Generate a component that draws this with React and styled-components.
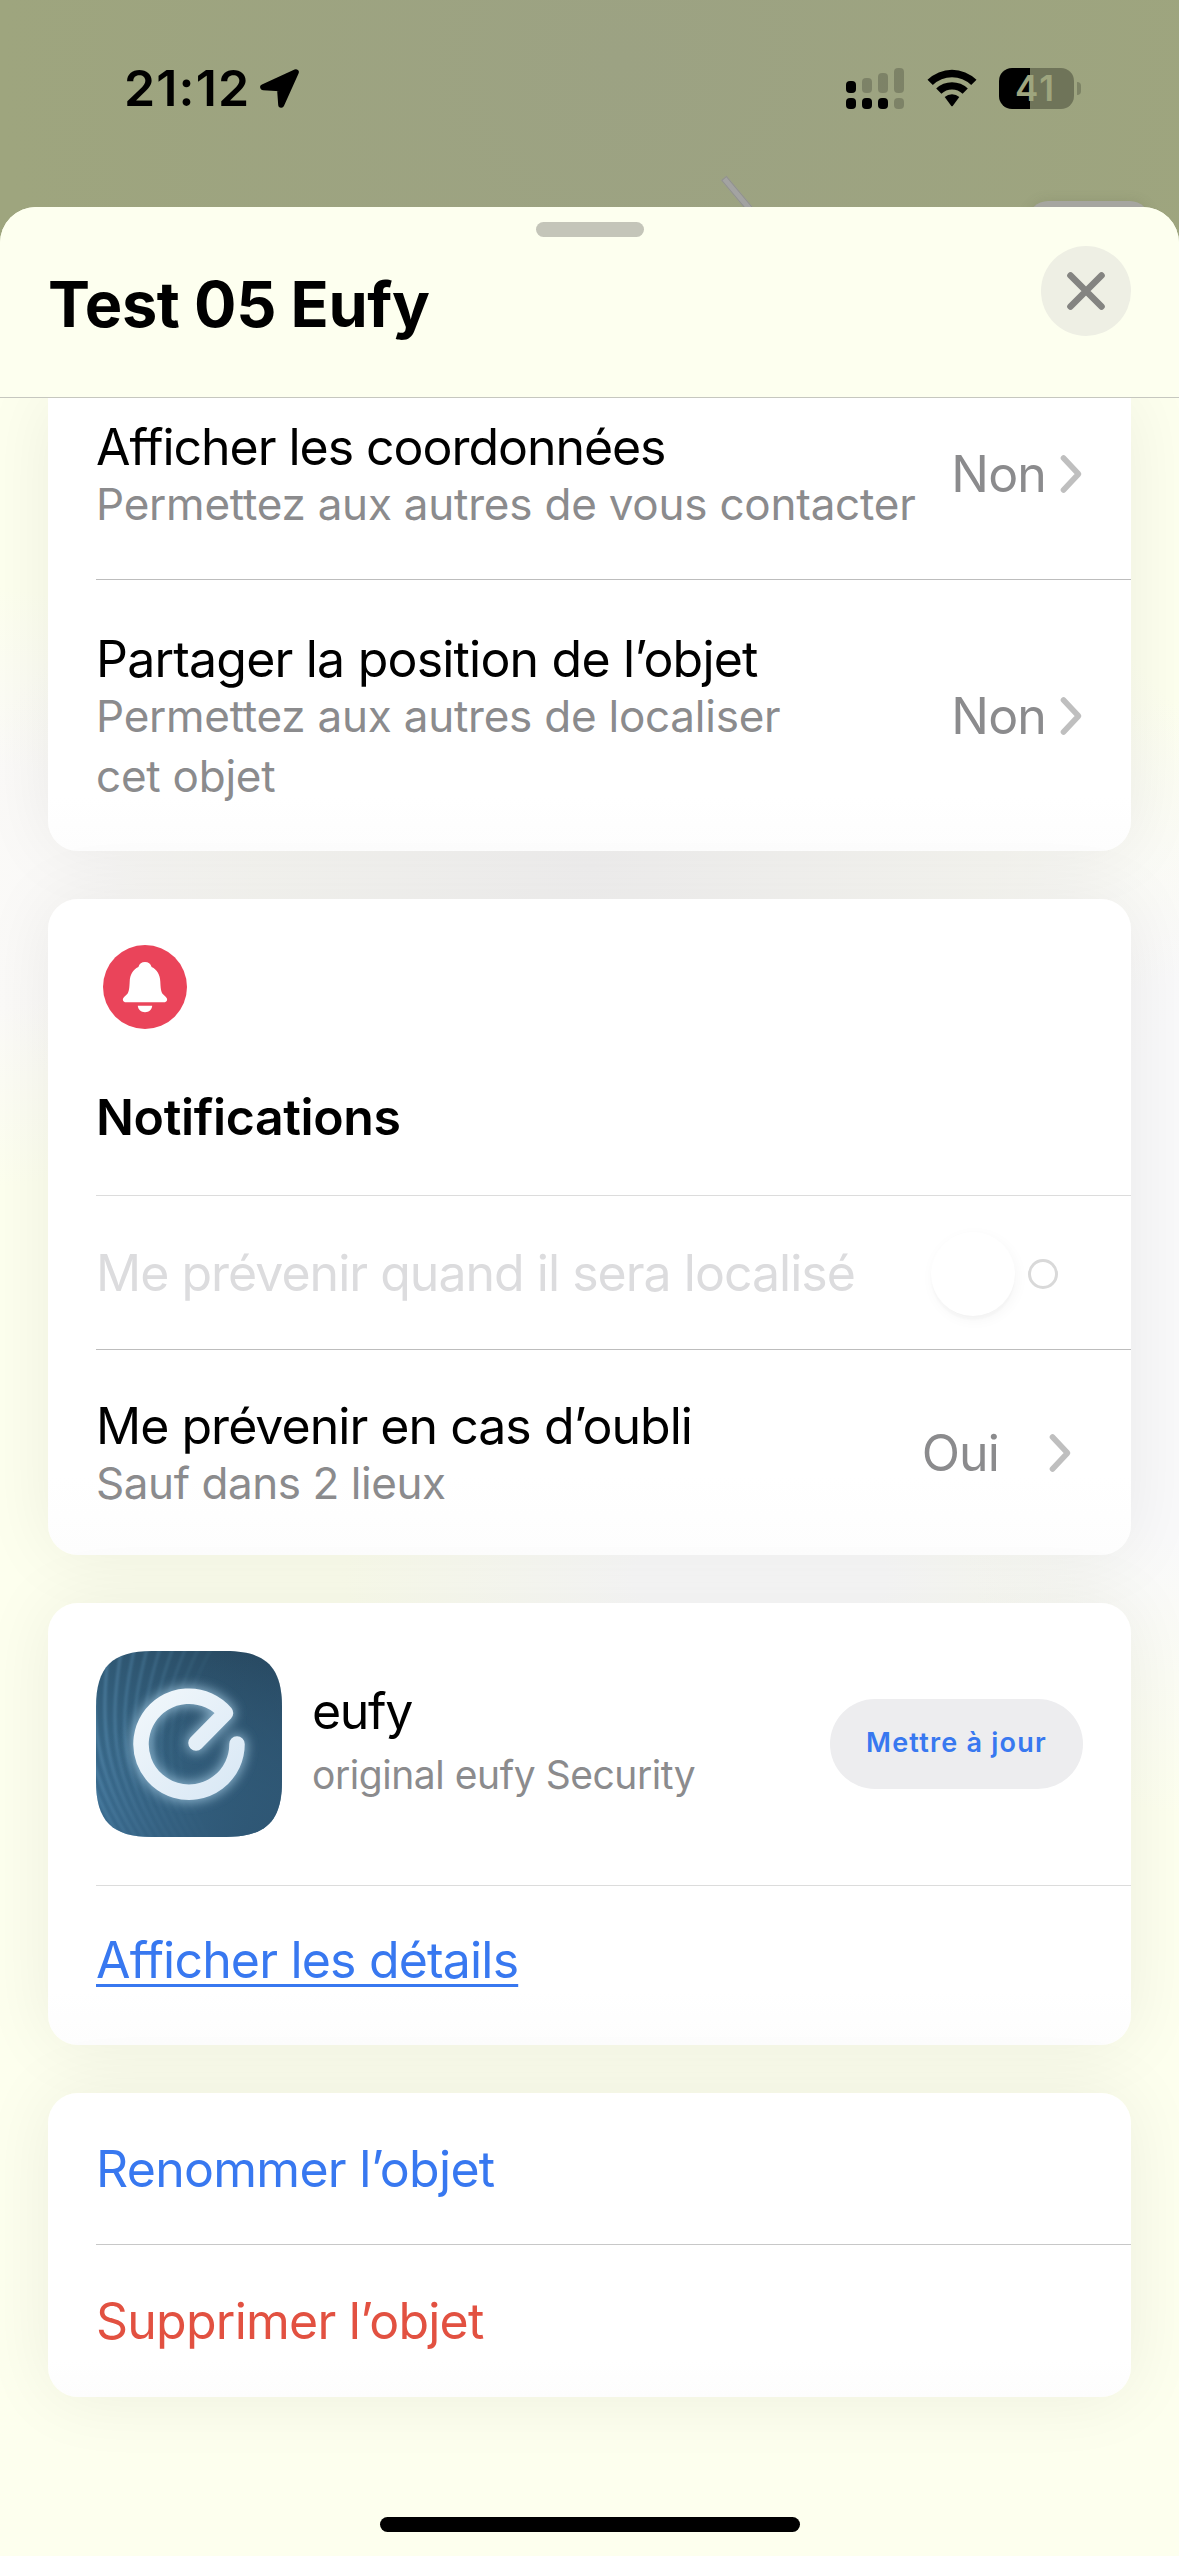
import React from "react";
import styled, { createGlobalStyle, css } from "styled-components";

const GlobalStyle = createGlobalStyle`
  * {
    box-sizing: border-box;
  }

  body {
    margin: 0;
    background: #fdffee;
    font-family: Inter, "Liberation Sans", sans-serif;
    color: #000;
  }
`;

const STRIPES = [0, 1, 2, 3, 4, 5, 6, 7, 8, 9, 10, 11];

const LocationArrow = () => (
  <svg width="41" height="41" viewBox="0 0 41 41">
    <path
      d="M36.8 4.2 L4.2 19.2 L21 20.3 L22.2 36.8 Z"
      fill="#000"
      stroke="#000"
      strokeWidth="6"
      strokeLinejoin="round"
    />
  </svg>
);

const WifiIcon = () => (
  <svg width="52" height="40" viewBox="0 0 52 40">
    <path d="M1.5 11.8 A35 35 0 0 1 50.5 11.8 L45.2 17 A27.6 27.6 0 0 0 6.8 17 Z" />
    <path d="M10.2 20.6 A22.6 22.6 0 0 1 41.8 20.6 L36.6 25.8 A15.3 15.3 0 0 0 15.4 25.8 Z" />
    <path d="M18.7 29.1 A10.6 10.6 0 0 1 33.3 29.1 L26.7 37.9 A1 1 0 0 1 25.3 37.9 Z" />
  </svg>
);

const CloseIcon = () => (
  <svg width="46" height="46" viewBox="0 0 46 46">
    <path
      d="M7.5 7.5 L38.5 38.5 M38.5 7.5 L7.5 38.5"
      stroke="#848481"
      strokeWidth="6.6"
      strokeLinecap="round"
    />
  </svg>
);

const ChevronIcon = () => (
  <svg width="24" height="42" viewBox="0 0 24 42" fill="none">
    <path
      d="M4.5 5 L19.5 21 L4.5 37"
      stroke="#bfbfbf"
      strokeWidth="5.6"
      strokeLinecap="round"
      strokeLinejoin="round"
    />
  </svg>
);

const BellIcon = () => (
  <svg width="84" height="84" viewBox="0 0 84 84">
    <circle cx="42" cy="42" r="42" fill="#ea445a" />
    <path
      d="M42 17 C45.4 17 47.6 18.9 48.6 21.9 C54.2 24.6 57 29.6 57.3 36.4 C57.6 42.8 57.9 46.8 59.8 49 L62.9 52 C65.3 54.4 64 57.3 60.9 57.3 H23.1 C20 57.3 18.7 54.4 21.1 52 L24.2 49 C26.1 46.8 26.4 42.8 26.7 36.4 C27 29.6 29.8 24.6 35.4 21.9 C36.4 18.9 38.6 17 42 17 Z"
      fill="#fff"
    />
    <path
      d="M34.8 60.8 H49.2 C48.8 64.8 46 67.2 42 67.2 C38 67.2 35.2 64.8 34.8 60.8 Z"
      fill="#fff"
    />
  </svg>
);

const EufyLogo = () => (
  <svg width="186" height="186" viewBox="0 0 186 186">
    <defs>
      <linearGradient id="eufyBase" x1="0.1" y1="1" x2="0.8" y2="0">
        <stop offset="0" stopColor="#3f749b" />
        <stop offset="0.4" stopColor="#34617f" />
        <stop offset="1" stopColor="#284961" />
      </linearGradient>
      <linearGradient id="eufySide" x1="0.4" y1="0.2" x2="1" y2="1">
        <stop offset="0" stopColor="#2e5674" stopOpacity="0" />
        <stop offset="1" stopColor="#2e5674" />
      </linearGradient>
      <linearGradient id="eufyStroke" x1="0" y1="0" x2="1" y2="1">
        <stop offset="0" stopColor="#f1f7fb" />
        <stop offset="1" stopColor="#d9e8f5" />
      </linearGradient>
      <filter id="eufyGlow" x="-30%" y="-30%" width="160%" height="160%">
        <feGaussianBlur stdDeviation="6" />
      </filter>
      <filter id="eufySoft">
        <feGaussianBlur stdDeviation="1" />
      </filter>
      <clipPath id="eufyClip">
        <path d="M0 56 C0 16 16 0 56 0 H130 C170 0 186 16 186 56 V130 C186 170 170 186 130 186 H56 C16 186 0 170 0 130 Z" />
      </clipPath>
      <path
        id="eufyMark"
        d="M141 93 A48 48 0 1 1 129.5 62 L100 92"
        fill="none"
        strokeLinecap="round"
        strokeLinejoin="round"
      />
    </defs>
    <g clipPath="url(#eufyClip)">
      <rect width="186" height="186" fill="url(#eufyBase)" />
      <g filter="url(#eufySoft)">
        {STRIPES.map((i) => (
          <path
            key={i}
            d={`M${-26 + i * 13} -6 C${-22 + i * 9} 70 ${-20 + i * 8} 120 ${
              30 + i * 8
            } 196`}
            fill="none"
            stroke="#6aa3c8"
            strokeWidth="3.4"
            opacity={0.42 - i * 0.032}
          />
        ))}
      </g>
      <rect width="186" height="186" fill="url(#eufySide)" />
      <use
        href="#eufyMark"
        stroke="#a9cfe6"
        strokeWidth="20"
        opacity="0.75"
        filter="url(#eufyGlow)"
      />
      <use href="#eufyMark" stroke="url(#eufyStroke)" strokeWidth="15.5" />
    </g>
  </svg>
);

const Setting = ({ title, track, children, value, valueTrack, wide, ...row }) => (
  <Row {...row}>
    <RowText>
      <RowTitle $track={track}>{title}</RowTitle>
      {children}
    </RowText>
    <Value $wide={wide}>
      <ValueText $track={valueTrack}>{value}</ValueText>
      <ChevronIcon />
    </Value>
  </Row>
);

const App = () => {
  return (
    <Screen>
      <GlobalStyle />
      <StatusBar>
        <Clock>
          <Time>21:12</Time>
          <LocationArrow />
        </Clock>
        <Indicators>
          <Signal>
            {[12, 15, 20, 25].map((height, i) => (
              <SignalColumn key={height}>
                <Bar $height={height} $on={i < 1} />
                <Bar $height={11} $on={i < 3} />
              </SignalColumn>
            ))}
          </Signal>
          <WifiIcon />
          <Battery>
            <BatteryBody>41</BatteryBody>
            <BatteryTip />
          </Battery>
        </Indicators>
        <Road />
        <MapButton />
      </StatusBar>

      <Sheet>
        <Header>
          <Grabber />
          <HeaderRow>
            <Title>Test 05 Eufy</Title>
            <CloseButton aria-label="Fermer">
              <CloseIcon />
            </CloseButton>
          </HeaderRow>
        </Header>

        <Content>
          <Card $cut>
            <Setting
              title="Afficher les coordonnées"
              track={-1.04}
              value="Non"
              valueTrack={-0.83}
              $height={182}
              $top={22}
              $bottom={45}
              $divider="#bdbdbd"
            >
              <Subtitle $track={-0.23}>
                Permettez aux autres de vous contacter
              </Subtitle>
            </Setting>
            <Setting
              title="Partager la position de l’objet"
              track={-0.8}
              value="Non"
              valueTrack={-0.83}
              $height={271}
              $top={52}
              $bottom={45}
            >
              <Subtitle $track={-0.24}>
                Permettez aux autres de localiser
                <br />
                cet objet
              </Subtitle>
            </Setting>
          </Card>

          <Card>
            <SectionHead>
              <BellIcon />
              <SectionTitle>Notifications</SectionTitle>
            </SectionHead>
            <Row $height={154} $divider="#bdbdbd">
              <RowTitle $track={-0.98} $color="#dcdcde">
                Me prévenir quand il sera localisé
              </RowTitle>
              <Toggle>
                <Knob />
                <OffMark />
              </Toggle>
            </Row>
            <Setting
              title="Me prévenir en cas d’oubli"
              track={-0.97}
              value="Oui"
              valueTrack={-0.9}
              wide
              $height={205}
              $top={49}
              $bottom={42}
            >
              <Subtitle $track={-0.44}>Sauf dans 2 lieux</Subtitle>
            </Setting>
          </Card>

          <Card>
            <Row $height={283} $divider="#dcdcdc">
              <AppInfo>
                <EufyLogo />
                <AppText>
                  <RowTitle $track={-1.3}>eufy</RowTitle>
                  <Publisher>original eufy Security</Publisher>
                </AppText>
              </AppInfo>
              <UpdateButton>Mettre à jour</UpdateButton>
            </Row>
            <Row $height={159}>
              <DetailsLink href="#details">Afficher les détails</DetailsLink>
            </Row>
          </Card>

          <Card>
            <Row $height={152} $divider="#c8c8c8">
              <RowTitle $track={-0.72} $color="#3878f0">
                Renommer l’objet
              </RowTitle>
            </Row>
            <Row $height={152}>
              <RowTitle $track={-0.77} $color="#e25141">
                Supprimer l’objet
              </RowTitle>
            </Row>
          </Card>
        </Content>
        <HomeIndicator />
      </Sheet>
    </Screen>
  );
};

const Screen = styled.div`
  display: flex;
  flex-direction: column;
  width: 1179px;
  height: 2556px;
  overflow: hidden;
  background: radial-gradient(circle at 620px 60px, #9ca283, #9ea57e 620px);
`;

const StatusBar = styled.div`
  position: relative;
  display: flex;
  justify-content: space-between;
  align-items: center;
  height: 207px;
  padding: 0 98px 31px 124px;
`;

const Clock = styled.div`
  display: flex;
  align-items: center;
  gap: 9px;
`;

const Time = styled.span`
  font-size: 50px;
  font-weight: 600;
  line-height: 60px;
  letter-spacing: 1.16px;
`;

const Indicators = styled.div`
  display: flex;
  align-items: center;
  gap: 21px;
`;

const Signal = styled.div`
  display: flex;
  align-items: flex-end;
  gap: 6px;
  margin-right: 1px;
`;

const SignalColumn = styled.div`
  display: flex;
  flex-direction: column;
  gap: 5px;
`;

const Bar = styled.span`
  width: 10px;
  height: ${({ $height }) => $height}px;
  border-radius: 4px;
  background: ${({ $on }) => ($on ? "#000" : "rgba(0, 0, 0, 0.2)")};
`;

const Battery = styled.div`
  display: flex;
  align-items: center;
  gap: 3px;
`;

const BatteryBody = styled.div`
  width: 75px;
  height: 41px;
  padding-right: 2px;
  border-radius: 13px;
  background: linear-gradient(90deg, #000 41%, #6f7459 41%);
  color: #9ea57e;
  font-size: 35px;
  font-weight: 600;
  line-height: 41px;
  letter-spacing: 2px;
  text-align: center;
`;

const BatteryTip = styled.span`
  width: 4px;
  height: 13px;
  border-radius: 0 6px 6px 0;
  background: #7d8365;
`;

/* bits of the map that show above the sheet */
const Road = styled.span`
  position: absolute;
  left: 737px;
  top: 172px;
  width: 7px;
  height: 52px;
  background: #a3a3a2;
  border: 1px solid #91928c;
  transform: rotate(-40deg);
`;

const MapButton = styled.span`
  position: absolute;
  left: 1028px;
  top: 201px;
  width: 122px;
  height: 40px;
  border-radius: 22px;
  background: #a6a6a0;
  box-shadow: 0 0 12px rgba(90, 95, 60, 0.18);
`;

const Sheet = styled.main`
  position: relative;
  flex: 1;
  display: flex;
  flex-direction: column;
  border-radius: 36px 36px 0 0;
  overflow: hidden;
  background: radial-gradient(
      ellipse 640px 400px at 590px 660px,
      rgba(243, 242, 242, 1),
      rgba(249, 248, 247, 0.7) 75%,
      rgba(249, 248, 247, 0) 100%
    ),
    radial-gradient(
      ellipse 260px 560px at 1179px 1050px,
      #f9f9fa 50%,
      rgba(249, 249, 250, 0)
    ),
    radial-gradient(
      ellipse 260px 300px at 0 680px,
      #fbfaf8 40%,
      rgba(251, 250, 248, 0)
    ),
    radial-gradient(
      ellipse 420px 160px at 760px 1370px,
      #fafafa 30%,
      rgba(250, 250, 250, 0)
    ),
    #fdffee;
`;

const Header = styled.header`
  position: relative;
  z-index: 1;
  display: flex;
  flex-direction: column;
  align-items: center;
  height: 191px;
  padding-top: 15px;
  background: #fdffef;
  border-bottom: 1px solid #c6c7bf;
`;

const Grabber = styled.span`
  width: 108px;
  height: 15px;
  border-radius: 8px;
  background: #c4c5b9;
`;

const HeaderRow = styled.div`
  display: flex;
  justify-content: space-between;
  width: 100%;
  padding: 9px 48px 0;
`;

const Title = styled.h1`
  margin: 18px 0 0;
  font-size: 63px;
  font-weight: 700;
  line-height: 80px;
  letter-spacing: -0.38px;
`;

const CloseButton = styled.button`
  display: flex;
  align-items: center;
  justify-content: center;
  width: 90px;
  height: 90px;
  padding: 0;
  border: none;
  border-radius: 50%;
  background: #eeefe4;
`;

const Content = styled.div`
  display: flex;
  flex-direction: column;
  gap: 48px;
  padding: 0 48px;
`;

const Card = styled.section`
  border-radius: ${({ $cut }) => ($cut ? "0 0 30px 30px" : "30px")};
  background: linear-gradient(#fff, #fff 88%, #fdfdfd);
  box-shadow: 0 0 72px rgba(0, 0, 0, 0.07);
`;

/* the divider starts at the text and runs to the card's right edge */
const Row = styled.div`
  display: flex;
  justify-content: space-between;
  align-items: center;
  height: ${({ $height }) => $height}px;
  margin-left: 48px;
  padding: ${({ $top }) => $top || 0}px 48px ${({ $bottom }) => $bottom || 0}px 0;
  ${({ $divider }) =>
    $divider &&
    css`
      border-bottom: 1px solid ${$divider};
    `}
`;

const RowText = styled.div`
  display: flex;
  flex-direction: column;
`;

const RowTitle = styled.span`
  font-size: 50px;
  line-height: 54px;
  letter-spacing: ${({ $track }) => $track}px;
  color: ${({ $color }) => $color || "#000"};
  white-space: nowrap;
`;

const Subtitle = styled.span`
  font-size: 44px;
  line-height: 60px;
  letter-spacing: ${({ $track }) => $track}px;
  color: #8b8b8d;
  white-space: nowrap;
`;

const Value = styled.div`
  display: flex;
  align-items: center;
  gap: ${({ $wide }) => ($wide ? 49 : 13)}px;
  padding-bottom: 6px;
  margin-right: ${({ $wide }) => ($wide ? 11 : 0)}px;
`;

const ValueText = styled.span`
  font-size: 50px;
  line-height: 60px;
  letter-spacing: ${({ $track }) => $track}px;
  color: #8b8b8d;
`;

const SectionHead = styled.div`
  display: flex;
  flex-direction: column;
  align-items: flex-start;
  gap: 58px;
  height: 297px;
  margin-left: 48px;
  padding-top: 46px;
  border-bottom: 1px solid #dcdcdc;

  svg {
    margin-left: 7px;
  }
`;

const SectionTitle = styled.h2`
  margin: 0;
  font-size: 50px;
  font-weight: 600;
  line-height: 60px;
  letter-spacing: -0.38px;
`;

const Toggle = styled.div`
  display: flex;
  align-items: center;
  gap: 13px;
  margin-right: 25px;
  padding-top: 2px;
`;

const Knob = styled.span`
  width: 84px;
  height: 84px;
  border-radius: 50%;
  background: #fff;
  box-shadow: 0 4px 2px rgba(0, 0, 0, 0.02), 2px 4px 14px rgba(0, 0, 0, 0.04);
`;

const OffMark = styled.span`
  width: 30px;
  height: 30px;
  border: 3px solid #d9d9d9;
  border-radius: 50%;
`;

const AppInfo = styled.div`
  display: flex;
  align-items: center;
  gap: 30px;
`;

const AppText = styled.div`
  display: flex;
  flex-direction: column;
  gap: 10px;
  padding-bottom: 2px;
`;

const Publisher = styled.span`
  font-size: 39px;
  line-height: 54px;
  letter-spacing: -0.45px;
  color: #8b8b8d;
`;

const UpdateButton = styled.button`
  width: 253px;
  height: 90px;
  padding: 0 0 3px;
  border: none;
  border-radius: 45px;
  background: #ededef;
  color: #3878f0;
  font-family: inherit;
  font-size: 27px;
  font-weight: 600;
  letter-spacing: 1.22px;
`;

const DetailsLink = styled.a`
  margin-bottom: 12px;
  font-size: 50px;
  line-height: 60px;
  letter-spacing: -0.82px;
  color: #3878f0;
  text-decoration: underline;
  text-decoration-thickness: 3px;
  text-decoration-skip-ink: none;
  text-underline-offset: 6px;
`;

const HomeIndicator = styled.span`
  align-self: center;
  width: 420px;
  height: 15px;
  margin-top: 120px;
  border-radius: 8px;
  background: #000;
`;

export default App;
